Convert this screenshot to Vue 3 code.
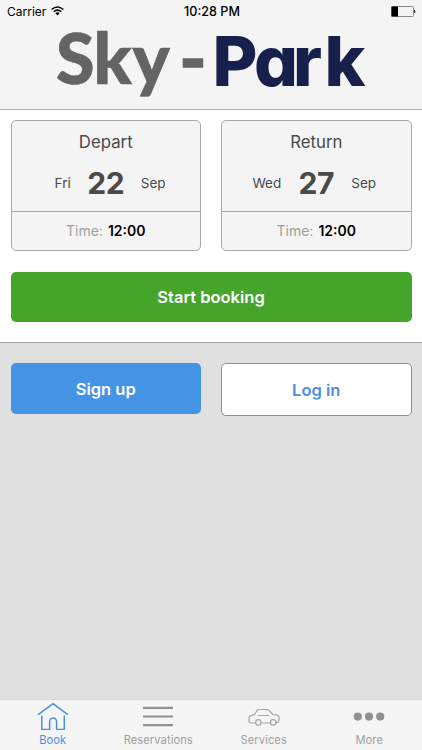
<script setup>
const trips = [
  { title: 'Depart', day: 'Fri', date: '22', month: 'Sep', time: '12:00' },
  { title: 'Return', day: 'Wed', date: '27', month: 'Sep', time: '12:00' },
]
const tabs = ['Book', 'Reservations', 'Services', 'More']
</script>

<template>
  <div class="screen">
    <header class="header">
      <div class="status">
        <div class="carrier">
          <span>Carrier</span>
          <svg width="13" height="10" viewBox="0 0 13 10" fill="none" stroke="#000" stroke-width="1.5">
            <path d="M.6 3.5Q6.5-1.5 12.4 3.5M2.7 5.8Q6.5 2.5 10.3 5.8" />
            <path d="M4.3 7.1Q6.5 5.3 8.7 7.1L6.5 9.4Z" fill="#000" stroke="none" />
          </svg>
        </div>
        <div class="clock">10:28 PM</div>
        <svg class="battery" width="25" height="11" viewBox="0 0 25 11">
          <rect x=".5" y=".5" width="22" height="10" rx="1" fill="none" stroke="#8a8a8a" />
          <path d="M.5.5H7v10H.5z" fill="#000" />
          <path d="M23.5 4q1 1.5 0 3z" fill="#000" stroke="#000" stroke-width=".6" />
        </svg>
      </div>
      <svg class="logo" width="422" height="109" viewBox="0 0 422 109">
        <text class="sky" x="56 93.5 132.5" y="84">Sky</text>
        <text class="dash" x="179.5" y="83.5" textLength="27" lengthAdjust="spacingAndGlyphs">-</text>
        <text class="park" x="212.5 254 293 324.5" y="86">Park</text>
      </svg>
    </header>

    <section class="booking">
      <div class="cards">
        <article v-for="t in trips" :key="t.title" class="card">
          <div class="date-part">
            <h2>{{ t.title }}</h2>
            <div class="date">
              <span class="day">{{ t.day }}</span>
              <b>{{ t.date }}</b>
              <span class="month">{{ t.month }}</span>
            </div>
          </div>
          <div class="time"><span>Time:</span> <b>{{ t.time }}</b></div>
        </article>
      </div>
      <button class="btn start">Start booking</button>
    </section>

    <section class="account">
      <button class="btn signup">Sign up</button>
      <button class="btn login">Log in</button>
    </section>

    <nav class="tabs">
      <a v-for="(tab, i) in tabs" :key="tab" :class="{ active: i === 0 }">
        <svg width="34" height="30" viewBox="0 0 34 30" fill="none">
          <g v-if="i === 0" stroke="#4a90e2" stroke-width="1.5" stroke-linecap="round" stroke-linejoin="round">
            <path d="M2.5 14.3 17 3.6l14.5 10.7" />
            <path d="M5.8 16v13.4h7.8v-7.9a3.5 3.5 0 0 1 7 0v7.9h7.7V16" />
          </g>
          <path v-else-if="i === 1" d="M2 7.8h30M2 16.5h30M2 25.2h30" stroke="#929292" stroke-width="2.2" />
          <g v-else-if="i === 2" stroke="#a5a5a5" stroke-width="1.2" stroke-linejoin="round" stroke-linecap="round">
            <path d="M8.6 23H4.2q-2.2-.3-2.2-2.4v-3.2q.2-1.4 2-1.8l3.4-.9 2.8-4.3q.5-.9 1.7-.9h8.2q1 0 1.8.8l4 4.2 4.2.7q2.2.5 2.1 2.8l-.4 3.2q-.2 1.2-1.7 1.4h-1M14.3 23h9M11.3 15.5h10.2" />
            <circle cx="11.4" cy="22.4" r="2.7" />
            <circle cx="26.2" cy="22.4" r="2.7" />
          </g>
          <g v-else fill="#909090">
            <circle cx="5.8" cy="16.6" r="4.1" />
            <circle cx="17" cy="16.6" r="4.1" />
            <circle cx="28.2" cy="16.6" r="4.1" />
          </g>
        </svg>
        <span>{{ tab }}</span>
      </a>
    </nav>
  </div>
</template>

<style>
body {
  margin: 0;
}
</style>

<style scoped>
.screen {
  display: flex;
  flex-direction: column;
  box-sizing: border-box;
  width: 422px;
  height: 750px;
  overflow: hidden;
  background: #e0e0e0;
  font-family: Inter, "Liberation Sans", sans-serif;
  color: #4a4a4a;
}
.header {
  box-sizing: border-box;
  height: 110px;
  background: #f4f4f4;
  border-bottom: 1px solid #adadad;
}
.status {
  display: grid;
  grid-template-columns: 1fr auto 1fr;
  align-items: center;
  height: 21px;
  padding: 1px 6px 0 8px;
  box-sizing: border-box;
  color: #000;
  font-size: 12px;
}
.carrier {
  display: flex;
  align-items: center;
  gap: 5px;
  margin-left: -1px;
}
.clock {
  font-size: 12.6px;
  font-weight: 500;
}
.battery {
  justify-self: end;
}
.logo {
  display: block;
  margin-top: -21px;
}
.sky,
.dash {
  font: 900 70px/1 Lato, sans-serif;
  fill: #646464;
  stroke: #646464;
  stroke-width: 0.7px;
}
.dash {
  stroke-width: 1.4px;
}
.park {
  font: 800 69px/1 Inter, sans-serif;
  font-feature-settings: "cv11";
  fill: #17204d;
}
.booking {
  box-sizing: border-box;
  height: 233px;
  padding: 10px 10.5px 0;
  background: #fff;
  border-bottom: 1px solid #a0a0a0;
}
.cards {
  display: grid;
  grid-template-columns: 1fr 1fr;
  gap: 20px;
}
.card {
  box-sizing: border-box;
  height: 131px;
  border: 1px solid #aaa;
  border-radius: 5px;
  background: #f4f4f4;
}
.date-part {
  box-sizing: border-box;
  height: 91px;
  border-bottom: 1px solid #aaa;
  padding-top: 10px;
}
h2 {
  margin: 0;
  font-size: 16.8px;
  font-weight: 400;
  line-height: 22px;
  text-align: center;
}
.date {
  display: grid;
  grid-template-columns: 1fr 38px 1fr;
  column-gap: 16px;
  align-items: center;
  height: 40px;
  margin-top: 10px;
  font-size: 13.5px;
}
.date b {
  font-size: 30px;
  font-weight: 700;
  text-align: center;
  letter-spacing: -0.5px;
}
.day {
  text-align: right;
}
.time {
  display: flex;
  justify-content: center;
  gap: 5px;
  line-height: 38px;
  font-size: 14px;
  color: #a0a0a0;
}
.time b {
  color: #000;
  font-weight: 600;
}
.btn {
  display: block;
  box-sizing: border-box;
  width: 100%;
  height: 50px;
  padding: 0;
  border: 0;
  border-radius: 5px;
  color: #fff;
  font-family: inherit;
  font-size: 16.5px;
  font-weight: 600;
}
.start {
  margin-top: 20.5px;
  background: #45a52a;
}
.account {
  display: grid;
  grid-template-columns: 1fr 1fr;
  gap: 20px;
  flex: 1;
  align-items: start;
  padding: 20.4px 10.5px 0;
}
.signup {
  height: 50.4px;
  background: #4494e6;
}
.login {
  height: 53px;
  background: #fff;
  border: 1px solid #5b9ade;
  color: #4a90e2;
}
.tabs {
  display: grid;
  grid-template-columns: repeat(4, 1fr);
  box-sizing: border-box;
  height: 51px;
  border-top: 1px solid #d9d9d9;
  background: #f5f5f5;
}
.tabs a {
  display: flex;
  flex-direction: column;
  align-items: center;
  color: #a0a0a0;
  font-size: 11.1px;
  line-height: 20px;
  letter-spacing: 0.1px;
}
.tabs svg {
  display: block;
}
.tabs .active {
  color: #4a90e2;
}
</style>
